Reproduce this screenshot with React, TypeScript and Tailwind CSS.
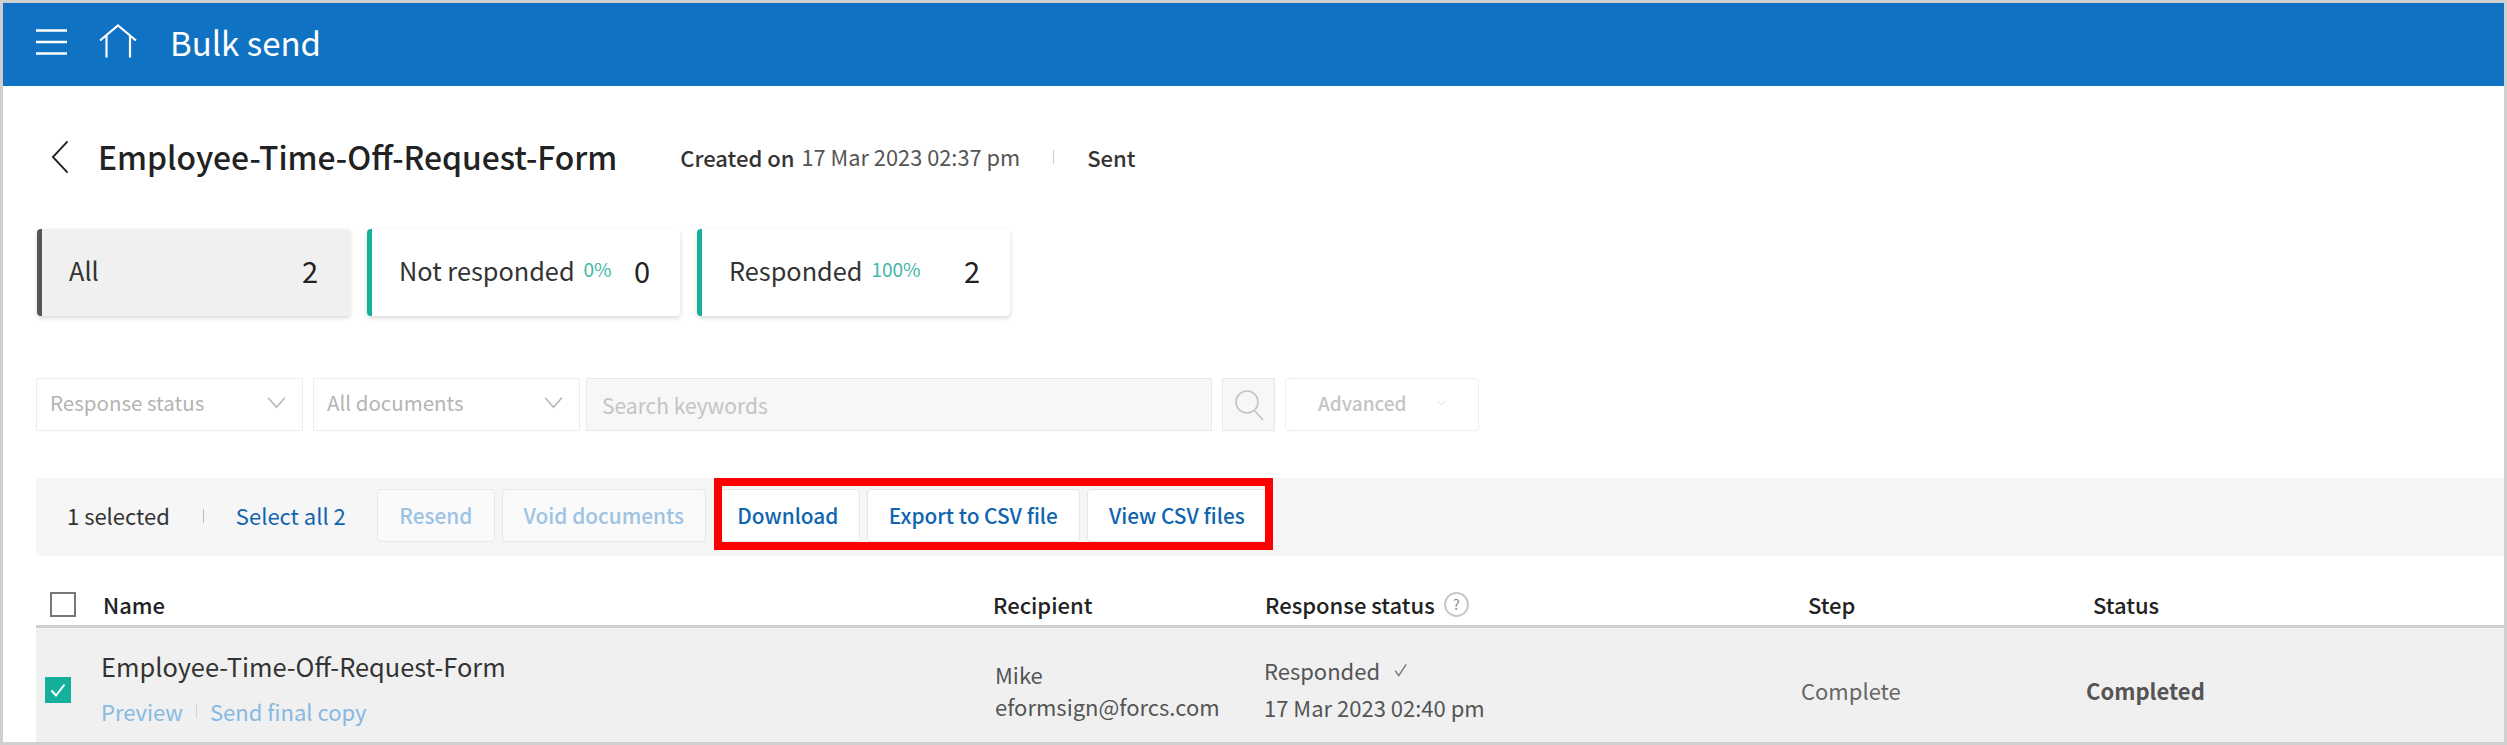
import React from "react";

const font = { fontFamily: '"Noto Sans CJK KR", "Noto Sans", sans-serif' };

function Chevron({ className }: { className?: string }) {
  return (
    <svg viewBox="0 0 20 12" className={className} fill="none" stroke="currentColor" strokeWidth="1.3">
      <path d="M2 1.5 10 10.500 18 1.5" />
    </svg>
  );
}

function Card({ label, pct, n, active }: { label: string; pct?: string; n: string; active?: boolean }) {
  return (
    <div
      className={`flex h-[87px] w-[313px] items-center rounded-[4px] border-l-[5px] pb-[4px] text-[25.300px] shadow-[0_2px_4px_rgba(0,0,0,0.16)] ${
        active ? "border-l-[#555555] bg-[#f0f0f0] pr-[32px] pl-[27px]" : "border-l-[#14b09b] bg-white pr-[30px] pl-[27px]"
      }`}
    >
      <span className="text-[#333333]">{label}</span>
      {pct && <span className="ml-[9px] -mt-[3px] text-[19px] text-[#3fb8a6]">{pct}</span>}
      <span className="ml-auto text-[29px] text-[#222222]">{n}</span>
    </div>
  );
}

function Select({ label, w }: { label: string; w: string }) {
  return (
    <div className={`flex h-[53px] items-center justify-between border border-[#ededed] bg-white pl-[13px] pr-[15px] pb-[4px] text-[20.500px] text-[#b4b4b4] ${w}`}>
      <span>{label}</span>
      <Chevron className="h-[13px] w-[21px] text-[#b0b0b0]" />
    </div>
  );
}

function Btn({ label, w, off }: { label: string; w: string; off?: boolean }) {
  return (
    <div
      className={`flex h-[53px] items-center justify-center rounded-[4px] border border-[#e6e6e6] text-[20.800px] font-medium ${w} ${
        off ? "bg-[#fafafa] text-[#9cc3e4]" : "bg-white text-[#0f65b0]"
      }`}
    >
      {label}
    </div>
  );
}

export default function App() {
  return (
    <div style={font} className="flex h-[745px] w-[2507px] flex-col overflow-hidden border-[3px] border-[#cfcfcf] bg-white">
      <header className="flex h-[83px] shrink-0 items-center bg-[#0f72c2] text-white">
        <svg viewBox="0 0 32 26" className="ml-[33px] -mt-[6px] h-[26px] w-[32px]" stroke="currentColor" strokeWidth="2.4" fill="none">
          <path d="M0 1.5h31M0 13h31M0 24.500h31" />
        </svg>
        <svg viewBox="0 0 38 34" className="ml-[31px] -mt-[8px] h-[34px] w-[38px]" stroke="currentColor" strokeWidth="2.2" fill="none">
          <path d="M1 16.500 19 1.500 37 16.500M7.500 11v22.500M31 11v22.500" />
        </svg>
        <span className="ml-[33px] -mt-[5px] text-[33px] leading-none">Bulk send</span>
      </header>

      <main className="relative flex min-h-0 flex-1 flex-col pl-[33px]">
        <div className="mt-[40px] flex h-[62px] items-center">
          <svg viewBox="0 0 20 36" className="ml-[14px] h-[34px] w-[20px] text-[#222222]" stroke="currentColor" strokeWidth="2" fill="none">
            <path d="M18 1.500 2.500 18 18 34.500" />
          </svg>
          <h1 className="ml-[28px] text-[31.800px] font-medium text-[#222222]">Employee-Time-Off-Request-Form</h1>
          <span className="ml-[63px] text-[22px] font-medium text-[#333333]">Created on</span>
          <span className="ml-[7px] text-[21.800px] text-[#555555]">17 Mar 2023 02:37 pm</span>
          <span className="ml-[33px] h-[14px] w-px bg-[#cccccc]" />
          <span className="ml-[33px] text-[22px] font-medium text-[#333333]">Sent</span>
        </div>

        <div className="mt-[41px] flex gap-[17px] pl-px">
          <Card label="All" n="2" active />
          <Card label="Not responded" pct="0%" n="0" />
          <Card label="Responded" pct="100%" n="2" />
        </div>

        <div className="mt-[62px] flex">
          <Select label="Response status" w="w-[267px]" />
          <div className="w-[10px]" />
          <Select label="All documents" w="w-[267px]" />
          <div className="ml-[6px] flex h-[53px] w-[626px] items-center border border-[#e8e8e8] bg-[#f7f7f7] pl-[15px] text-[21px] text-[#c4c4c4]">
            <span className="mt-[2px]">Search keywords</span>
          </div>
          <div className="ml-[10px] flex h-[53px] w-[53px] items-center justify-center border border-[#e8e8e8] bg-[#f7f7f7] text-[#c2c2c2]">
            <svg viewBox="0 0 34 34" className="h-[34px] w-[34px]" stroke="currentColor" strokeWidth="1.6" fill="none">
              <circle cx="15" cy="14" r="11" />
              <path d="m23 23 8 9" />
            </svg>
          </div>
          <div className="ml-[10px] flex h-[53px] w-[194px] items-center rounded-[4px] border border-[#efefef] bg-white pb-[3px] pl-[32px] text-[19px] font-medium text-[#c4c4c4]">
            <span>Advanced</span>
            <Chevron className="ml-[30px] h-[6px] w-[9px]" />
          </div>
        </div>

        <div className="mt-[47px] flex h-[78px] items-center rounded-l-[4px] bg-[#f6f6f6] pb-[3px] pl-[31px]">
          <span className="text-[22px] text-[#333333]">1 selected</span>
          <span className="ml-[33px] h-[14px] w-px bg-[#bbbbbb]" />
          <span className="ml-[32px] text-[22px] text-[#0f65b0]">Select all 2</span>
          <div className="ml-[31px] flex gap-[7px]">
            <Btn label="Resend" w="w-[118px]" off />
            <Btn label="Void documents" w="w-[204px]" off />
            <Btn label="Download" w="w-[144px] ml-[3px]" />
            <Btn label="Export to CSV file" w="w-[213px]" />
            <Btn label="View CSV files" w="w-[180px]" />
          </div>
        </div>

        <div className="absolute left-[711px] top-[392px] h-[72px] w-[559px] border-[8px] border-[#ff0000]" />

        <div className="flex h-[72px] shrink-0 items-center border-b-[3px] border-b-[#cfcfcf] pt-[28px] text-[22px] font-medium text-[#222222]">
          <div className="flex w-[957px] items-center">
            <span className="ml-[14px] h-[25px] w-[26px] border-2 border-[#777777] bg-white" />
            <span className="ml-[27px]">Name</span>
          </div>
          <span className="w-[272px]">Recipient</span>
          <div className="flex w-[543px] items-center">
            <span>Response status</span>
            <span className="ml-[9px] flex h-[25px] w-[25px] items-center justify-center rounded-full border-2 border-[#c8c8c8] text-[14px] font-normal text-[#888888]">?</span>
          </div>
          <span className="w-[285px]">Step</span>
          <span>Status</span>
        </div>

        <div className="flex h-[114px] shrink-0 items-center bg-[#f0f0f0] pt-[10px]">
          <div className="flex w-[957px] items-center">
            <span className="ml-[9px] flex h-[26px] w-[26px] items-center justify-center bg-[#14b09b] text-white">
              <svg viewBox="0 0 26 26" className="h-[26px] w-[26px]" stroke="currentColor" strokeWidth="2" fill="none">
                <path d="m6.500 13.500 4.500 5 8.500-11" />
              </svg>
            </span>
            <div className="ml-[30px] -mt-[4px] flex flex-col">
              <span className="text-[25.400px] leading-[32px] text-[#333333]">Employee-Time-Off-Request-Form</span>
              <div className="mt-[14px] flex items-center text-[22px] leading-[30px] text-[#88b9e0]">
                <span>Preview</span>
                <span className="mx-[13px] h-[14px] w-px bg-[#d5d5d5]" />
                <span>Send final copy</span>
              </div>
            </div>
          </div>
          <div className="flex w-[271px] flex-col pl-[2px] text-[22px] leading-[32px] text-[#555555]">
            <span>Mike</span>
            <span>eformsign@forcs.com</span>
          </div>
          <div className="-mt-[3px] flex w-[537px] flex-col text-[22px] leading-[36px] text-[#555555]">
            <span className="flex items-center">
              Responded
              <svg viewBox="0 0 14 14" className="ml-[13px] h-[16px] w-[16px] text-[#777777]" stroke="currentColor" strokeWidth="1.2" fill="none">
                <path d="m2 7.500 3 4.500 6.500-10" />
              </svg>
            </span>
            <span className="mt-px">17 Mar 2023 02:40 pm</span>
          </div>
          <span className="w-[285px] text-[22px] text-[#666666]">Complete</span>
          <span className="text-[22px] font-bold text-[#555555]">Completed</span>
        </div>
      </main>
    </div>
  );
}
